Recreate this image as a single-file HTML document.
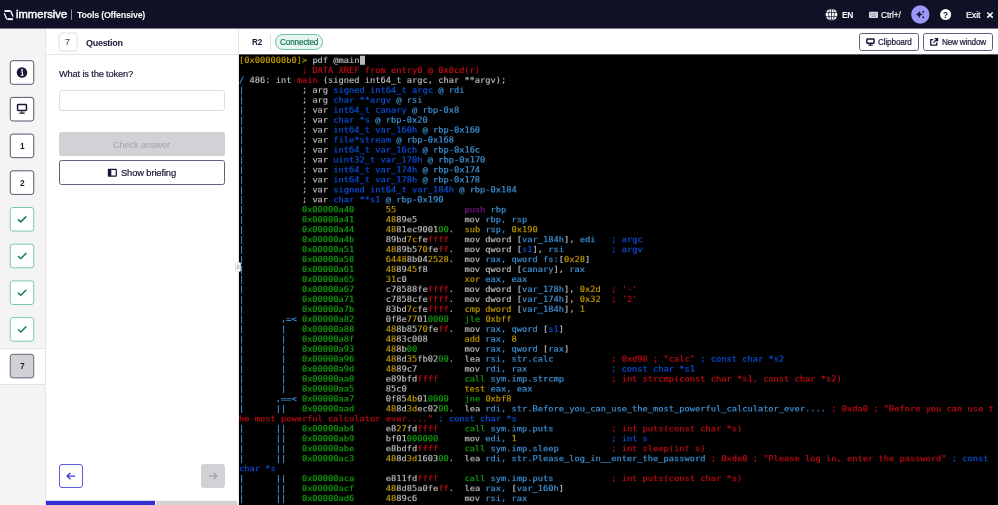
<!DOCTYPE html>
<html lang="en"><head><meta charset="utf-8"><title>Tools (Offensive)</title>
<style>
*{box-sizing:border-box;margin:0;padding:0}
html,body{width:998px;height:505px;overflow:hidden;background:#fff}
body{position:relative;font-family:"Liberation Sans",sans-serif;color:#17173a;-webkit-font-smoothing:antialiased}
.abs,.abs>*{position:absolute}
.t{position:absolute;white-space:pre;line-height:1;will-change:transform}
/* header */
#hdr{position:absolute;left:0;top:0;width:998px;height:28px;background:#101127}
#hdr:after{content:'';position:absolute;left:0;top:28px;width:998px;height:1px;background:#7d7d89}
#hdr .t{color:#fff}
/* sidebar */
#side{position:absolute;left:0;top:29px;width:46px;height:476px;background:#f4f4f5;border-right:1px solid #e6e6ea}
.sb{position:absolute;left:9.7px;width:24.6px;height:24.6px;border:1px solid #55556d;border-radius:2.5px;background:#fff}
.sb.ok{border-color:#7cc7b1}
.sb.on{background:#d0d0d5;border-color:#66667c}
.sb span{will-change:transform;position:absolute;left:0;right:0;top:7.6px;text-align:center;font-weight:700;font-size:8.4px;line-height:8px;color:#1d1d3c}
.sb svg{position:absolute;left:0;top:0}
#act{position:absolute;left:0;top:348px;width:45px;height:36.5px;background:#fff;border-top:1px solid #e2e2e6;border-bottom:1px solid #e2e2e6}
/* question panel */
#qp{position:absolute;left:46px;top:29px;width:193px;height:476px;background:#fff;border-right:1px solid #e6e6ea}
#qh{position:absolute;left:46px;top:29px;width:192px;height:25.5px;border-bottom:1px solid #e4e4e8}
/* terminal bar */
#tb{position:absolute;left:239px;top:29px;width:759px;height:26px;background:#fff}
.btn{position:absolute;border:1px solid #60607a;border-radius:2.5px;background:#fff}
/* terminal */
#term{position:absolute;left:239.00px;top:54.00px;width:759px;height:451px;background:#000;overflow:hidden;
 font-family:"DejaVu Sans Mono","Liberation Mono",monospace;font-size:8.710px;letter-spacing:0.0011px;color:#bebebe;}
#term .ln{position:absolute;left:0;transform-origin:0 8px;will-change:transform;-webkit-text-stroke:.18px;height:10px;line-height:10px;white-space:pre}
#term b{font-weight:400}
.y{color:#c19c00}b.r{color:#c80c14}.g{color:#13a10e}b.b{color:#0a52e0}.m{color:#881798}.c{color:#4197dc}
.cur{position:absolute;top:0;width:5.245px;height:10px;background:#b9b9b9}

</style></head>
<body>
<div id="hdr">
  <svg style="position:absolute;left:0;top:0" width="80" height="29" viewBox="0 0 80 29" fill="none" stroke="#fff" stroke-width="1.5" stroke-linecap="round" stroke-linejoin="round">
    <path d="M4.5 11.05H9.5" stroke-width="1.9" stroke-linecap="butt"/>
    <path d="M9.2 10.75Q10.7 10.75 11.25 12.1L12.9 16.2" stroke-width="1.3"/>
    <path d="M12.9 19.15H8" stroke-width="1.9" stroke-linecap="butt"/>
    <path d="M8.3 19.45Q6.8 19.45 6.25 18.1L4.5 13.7" stroke-width="1.3"/>
    <path d="M71.5 9.6V19.9" stroke="#8d8da3" stroke-width="1" stroke-linecap="butt"/>
  </svg>
  <span class="t" style="left:15.9px;top:9px;font-size:11.2px;transform:translateY(0.10px);-webkit-text-stroke:.45px #fff;letter-spacing:.03px">immersive</span>
  <span class="t" style="left:76.6px;top:11px;font-size:8.9px;transform:translateY(0.10px);font-weight:700;letter-spacing:-.22px">Tools (Offensive)</span>

  <svg style="position:absolute;left:820px;top:0" width="178" height="29" viewBox="820 0 178 29">
    <!-- globe -->
    <g>
      <circle cx="831.5" cy="14.6" r="5.85" fill="#fff"/>
      <g stroke="#101127" stroke-width=".7" fill="none">
        <ellipse cx="831.5" cy="14.6" rx="2.9" ry="5.85"/>
        <path d="M831.5 8.6V20.6M825.6 12.6H837.4M825.6 16.6H837.4"/>
      </g>
    </g>
    <!-- keyboard -->
    <rect x="869" y="11.7" width="9" height="6.2" rx=".8" fill="#dcdce4"/>
    <g stroke="#6f6f84" stroke-width=".75" stroke-dasharray=".8 .55"><path d="M870.2 13.5H877M870.2 14.9H877"/><path d="M871.4 16.3H875.8" stroke-dasharray="none"/></g>
    <!-- sparkle -->
    <circle cx="920.3" cy="14.5" r="9.15" fill="#9b97f6"/>
    <path d="M919.2 11.3Q919.6 14.1 922.4 14.5Q919.6 14.9 919.2 17.7Q918.8 14.9 916 14.5Q918.8 14.1 919.2 11.3Z" fill="#17173a" stroke="#17173a" stroke-width=".2" stroke-linejoin="round"/>
    <circle cx="923.2" cy="11.9" r=".95" fill="#17173a"/>
    <circle cx="923.3" cy="17.2" r=".95" fill="#17173a"/>
    <!-- help -->
    <circle cx="945.6" cy="14.6" r="5.5" fill="#fff"/>
    <!-- close -->
    <path d="M987.3 12.5L992.7 17.6M992.7 12.5L987.3 17.6" stroke="#fff" stroke-width="1.5" fill="none"/>
  </svg>
  <span class="t" style="left:841.9px;top:10px;font-size:8.4px;transform:translateY(0.90px);font-weight:700;letter-spacing:-.45px">EN</span>
  <span class="t" style="left:880.9px;top:10px;font-size:8.4px;transform:translateY(0.90px);letter-spacing:-.06px;-webkit-text-stroke:.17px #fff">Ctrl+/</span>
  <span class="t" style="left:943.2px;top:11px;font-size:8.2px;transform:translateY(0.50px);font-weight:700;color:#101127">?</span>
  <span class="t" style="left:966.2px;top:10px;font-size:8.9px;transform:translateY(0.90px);letter-spacing:-.08px;-webkit-text-stroke:.2px #fff">Exit</span>
</div>

<div id="side"></div>
<div id="act"></div>
<svg style="position:absolute;left:9px;top:59px" width="26" height="28" viewBox="0 0 26 28"><rect x="1.25" y="1.70" width="23.5" height="23.6" rx="2.6" fill="#fff" stroke="#55556d" stroke-width="1"/><circle cx="13.00" cy="13.50" r="5.25" fill="#17173a"/><circle cx="13.00" cy="11.00" r=".95" fill="#fff"/><path d="M11.90 13.00h1.6v3.2M11.70 16.20h2.8" stroke="#fff" stroke-width="1.05" fill="none"/></svg>
<svg style="position:absolute;left:9px;top:95px" width="26" height="28" viewBox="0 0 26 28"><rect x="1.25" y="2.40" width="23.5" height="23.6" rx="2.6" fill="#fff" stroke="#55556d" stroke-width="1"/><rect x="8.55" y="9.60" width="8.9" height="5.9" rx=".7" fill="none" stroke="#17173a" stroke-width="1.5"/><path d="M13.00 16.20v1.8M10.30 18.20h5.4" stroke="#17173a" stroke-width="1.2" fill="none"/></svg>
<svg style="position:absolute;left:9px;top:132px" width="26" height="28" viewBox="0 0 26 28"><rect x="1.25" y="2.10" width="23.5" height="23.6" rx="2.6" fill="#fff" stroke="#55556d" stroke-width="1"/></svg>
<span class="t" style="left:19.65px;top:141px;font-size:8.4px;transform:translateY(0.80px);font-weight:700;color:#1d1d3c">1</span>
<svg style="position:absolute;left:9px;top:169px" width="26" height="28" viewBox="0 0 26 28"><rect x="1.25" y="1.80" width="23.5" height="23.6" rx="2.6" fill="#fff" stroke="#55556d" stroke-width="1"/></svg>
<span class="t" style="left:19.65px;top:178px;font-size:8.4px;transform:translateY(0.50px);font-weight:700;color:#1d1d3c">2</span>
<svg style="position:absolute;left:9px;top:206px" width="26" height="28" viewBox="0 0 26 28"><rect x="1.25" y="1.50" width="23.5" height="23.6" rx="2.6" fill="#fff" stroke="#7cc7b1" stroke-width="1"/><path d="M8.90 13.40L11.90 15.90L17.30 10.40" stroke="#11805d" stroke-width="1.5" fill="none"/></svg>
<svg style="position:absolute;left:9px;top:242px" width="26" height="28" viewBox="0 0 26 28"><rect x="1.25" y="2.20" width="23.5" height="23.6" rx="2.6" fill="#fff" stroke="#7cc7b1" stroke-width="1"/><path d="M8.90 14.10L11.90 16.60L17.30 11.10" stroke="#11805d" stroke-width="1.5" fill="none"/></svg>
<svg style="position:absolute;left:9px;top:279px" width="26" height="28" viewBox="0 0 26 28"><rect x="1.25" y="1.90" width="23.5" height="23.6" rx="2.6" fill="#fff" stroke="#7cc7b1" stroke-width="1"/><path d="M8.90 13.80L11.90 16.30L17.30 10.80" stroke="#11805d" stroke-width="1.5" fill="none"/></svg>
<svg style="position:absolute;left:9px;top:316px" width="26" height="28" viewBox="0 0 26 28"><rect x="1.25" y="1.60" width="23.5" height="23.6" rx="2.6" fill="#fff" stroke="#7cc7b1" stroke-width="1"/><path d="M8.90 13.50L11.90 16.00L17.30 10.50" stroke="#11805d" stroke-width="1.5" fill="none"/></svg>
<svg style="position:absolute;left:9px;top:352px" width="26" height="28" viewBox="0 0 26 28"><rect x="1.25" y="2.30" width="23.5" height="23.6" rx="2.6" fill="#d0d0d5" stroke="#66667c" stroke-width="1"/></svg>
<span class="t" style="left:19.65px;top:362px;font-size:8.4px;transform:translateY(0.00px);font-weight:700;color:#1d1d3c">7</span>

<div id="qp"></div>
<div id="qh"></div>
<svg style="position:absolute;left:56px;top:30px" width="24" height="24" viewBox="56 30 24 24"><rect x="59.1" y="33" width="18" height="18" rx="2.8" fill="#fff" stroke="#dcdce2" stroke-width="1"/></svg>
<span class="t" style="left:65.3px;top:38px;font-size:9px;transform:translateY(0.40px);color:#3b3b55">7</span>
<span class="t" style="left:85.7px;top:38px;font-size:9px;transform:translateY(0.60px);font-weight:700;letter-spacing:-.29px">Question</span>
<span class="t" style="left:58.6px;top:70px;font-size:9.3px;transform:translateY(0.10px);letter-spacing:-.17px;-webkit-text-stroke:.18px #17173a">What is the token?</span>
<div style="position:absolute;left:58.6px;top:90.1px;width:166.4px;height:21.3px;border:1px solid #dcdce1;border-radius:3px"></div>
<div style="position:absolute;left:58.8px;top:132.4px;width:166.2px;height:23.9px;background:#d1d1d6;border-radius:2.5px"></div>
<span class="t" style="left:113.3px;top:140px;font-size:9.3px;transform:translateY(0.80px);letter-spacing:-.17px;color:#a3a3ae">Check answer</span>
<div class="btn" style="left:58.8px;top:160.1px;width:166.2px;height:24.6px"></div>
<svg style="position:absolute;left:106px;top:167px" width="12" height="12" viewBox="106 167 12 12"><rect x="108.4" y="169.3" width="7.9" height="6.8" rx=".4" fill="none" stroke="#17173a" stroke-width="1.2"/><rect x="108.4" y="169.3" width="2.9" height="6.8" fill="#17173a"/></svg>
<span class="t" style="left:121px;top:168px;font-size:9.4px;transform:translateY(0.40px);letter-spacing:-.14px;-webkit-text-stroke:.2px #17173a">Show briefing</span>

<div style="position:absolute;left:58.6px;top:463.8px;width:24.3px;height:24.1px;border:1px solid #5c5cdb;border-radius:3px"></div>
<svg style="position:absolute;left:58.6px;top:463.8px" width="24.3" height="24.1" viewBox="0 0 24.3 24.1"><path d="M16.2 12.1H8.2M11.4 8.9L8.1 12.1L11.4 15.3" stroke="#3d3dd0" stroke-width="1.4" fill="none"/></svg>
<div style="position:absolute;left:201.2px;top:463.8px;width:23.8px;height:24.1px;background:#d1d1d6;border-radius:3px"></div>
<svg style="position:absolute;left:201.2px;top:463.8px" width="23.8" height="24.1" viewBox="0 0 23.8 24.1"><path d="M7.8 12.1H15.8M12.6 8.9L15.9 12.1L12.6 15.3" stroke="#a3a3ae" stroke-width="1.4" fill="none"/></svg>
<svg style="position:absolute;left:46px;top:500px" width="193" height="5" viewBox="46 500 193 5"><rect x="46" y="500.8" width="109.1" height="4.2" fill="#2e2ed3"/><rect x="156.2" y="500.8" width="81.1" height="4.2" fill="#d1d1d6"/></svg>

<div id="tb"></div>
<span class="t" style="left:251.5px;top:39px;font-size:8.2px;transform:translateY(0.10px);font-weight:700;letter-spacing:-.2px">R2</span>
<div style="position:absolute;left:270.3px;top:34px;width:1px;height:16px;background:#e2e2e6"></div>
<div style="position:absolute;left:275px;top:34.4px;width:47.7px;height:15.4px;border:1px solid #6fc2aa;border-radius:8px;background:#e7f6f1"></div>
<span class="t" style="left:279.6px;top:38px;font-size:8.2px;transform:translateY(0.90px);letter-spacing:-.15px;color:#18735a;-webkit-text-stroke:.2px #18735a">Connected</span>
<div class="btn" style="left:859.4px;top:33px;width:59.2px;height:18px"></div>
<svg style="position:absolute;left:865px;top:36px" width="12" height="12" viewBox="865 36 12 12"><rect x="866.85" y="38.95" width="7.2" height="4.3" rx=".7" fill="none" stroke="#17173a" stroke-width="1.5"/><path d="M870.45 43.6V45M868.2 45.1h4.5" stroke="#17173a" stroke-width="1.1" fill="none"/></svg>
<span class="t" style="left:877.9px;top:38px;font-size:8.2px;transform:translateY(0.80px);letter-spacing:-.15px;-webkit-text-stroke:.2px #17173a">Clipboard</span>
<div class="btn" style="left:923.2px;top:33px;width:70px;height:18px"></div>
<svg style="position:absolute;left:928px;top:36px" width="12" height="12" viewBox="928 36 12 12"><path d="M933.3 39.7H930.75V45.15H936.7V42.6" fill="none" stroke="#17173a" stroke-width="1.3"/><path d="M934.7 38.65H937.55V41.5M937.3 38.9L933.6 42.6" fill="none" stroke="#17173a" stroke-width="1.3"/></svg>
<span class="t" style="left:941.8px;top:38px;font-size:8.2px;transform:translateY(0.80px);letter-spacing:-.2px;-webkit-text-stroke:.2px #17173a">New window</span>

<div id="term">
<div class="ln" style="top:0px;transform:translateY(0.95px) scaleY(.9)"><b class="y">[0x000008b0]&gt;</b> pdf @main<i class="cur" style="left:120.64px"></i></div>
<div class="ln" style="top:10px;transform:translateY(0.91px) scaleY(.9)">            <b class="r">; DATA XREF from entry0 @ 0x8cd(r)</b></div>
<div class="ln" style="top:20px;transform:translateY(0.86px) scaleY(.9)"><b class="c">/</b> 486: int <b class="r">main</b> (signed int64_t argc, char **argv);</div>
<div class="ln" style="top:30px;transform:translateY(0.82px) scaleY(.9)"><b class="c">|</b>           ; arg <b class="b">signed int64_t argc</b><b class="c"> @ rdi</b></div>
<div class="ln" style="top:40px;transform:translateY(0.78px) scaleY(.9)"><b class="c">|</b>           ; arg <b class="b">char **argv</b><b class="c"> @ rsi</b></div>
<div class="ln" style="top:50px;transform:translateY(0.74px) scaleY(.9)"><b class="c">|</b>           ; var <b class="b">int64_t canary</b><b class="c"> @ rbp-0x8</b></div>
<div class="ln" style="top:60px;transform:translateY(0.69px) scaleY(.9)"><b class="c">|</b>           ; var <b class="b">char *s</b><b class="c"> @ rbp-0x20</b></div>
<div class="ln" style="top:70px;transform:translateY(0.65px) scaleY(.9)"><b class="c">|</b>           ; var <b class="b">int64_t var_160h</b><b class="c"> @ rbp-0x160</b></div>
<div class="ln" style="top:80px;transform:translateY(0.61px) scaleY(.9)"><b class="c">|</b>           ; var <b class="b">file*stream</b><b class="c"> @ rbp-0x168</b></div>
<div class="ln" style="top:90px;transform:translateY(0.56px) scaleY(.9)"><b class="c">|</b>           ; var <b class="b">int64_t var_16ch</b><b class="c"> @ rbp-0x16c</b></div>
<div class="ln" style="top:100px;transform:translateY(0.52px) scaleY(.9)"><b class="c">|</b>           ; var <b class="b">uint32_t var_170h</b><b class="c"> @ rbp-0x170</b></div>
<div class="ln" style="top:110px;transform:translateY(0.48px) scaleY(.9)"><b class="c">|</b>           ; var <b class="b">int64_t var_174h</b><b class="c"> @ rbp-0x174</b></div>
<div class="ln" style="top:120px;transform:translateY(0.43px) scaleY(.9)"><b class="c">|</b>           ; var <b class="b">int64_t var_178h</b><b class="c"> @ rbp-0x178</b></div>
<div class="ln" style="top:130px;transform:translateY(0.39px) scaleY(.9)"><b class="c">|</b>           ; var <b class="b">signed int64_t var_184h</b><b class="c"> @ rbp-0x184</b></div>
<div class="ln" style="top:140px;transform:translateY(0.35px) scaleY(.9)"><b class="c">|</b>           ; var <b class="b">char **s1</b><b class="c"> @ rbp-0x190</b></div>
<div class="ln" style="top:150px;transform:translateY(0.31px) scaleY(.9)"><b class="c">|           </b><b class="g">0x00000a40</b>      <b class="y">55</b>             <b class="m">push</b><b class="c"> rbp</b></div>
<div class="ln" style="top:160px;transform:translateY(0.26px) scaleY(.9)"><b class="c">|           </b><b class="g">0x00000a41</b>      <b class="y">48</b>89e5         mov<b class="c"> rbp, rsp</b></div>
<div class="ln" style="top:170px;transform:translateY(0.22px) scaleY(.9)"><b class="c">|           </b><b class="g">0x00000a44</b>      <b class="y">48</b>81ec9001<b class="g">00</b>.  <b class="y">sub</b><b class="c"> rsp, </b><b class="y">0x190</b></div>
<div class="ln" style="top:180px;transform:translateY(0.18px) scaleY(.9)"><b class="c">|           </b><b class="g">0x00000a4b</b>      89bd<b class="y">7c</b>fe<b class="r">ffff</b>   mov dword [<b class="c">var_184h</b>], <b class="c">edi</b>   <b class="b">; argc</b></div>
<div class="ln" style="top:190px;transform:translateY(0.13px) scaleY(.9)"><b class="c">|           </b><b class="g">0x00000a51</b>      <b class="y">48</b>89b5<b class="y">70</b>fe<b class="r">ff</b>.  mov qword [<b class="b">s1</b>], <b class="c">rsi</b>         <b class="b">; argv</b></div>
<div class="ln" style="top:200px;transform:translateY(0.09px) scaleY(.9)"><b class="c">|           </b><b class="g">0x00000a58</b>      <b class="y">6448</b>8b04<b class="y">2528</b>.  mov<b class="c"> rax, qword fs:</b>[<b class="y">0x28</b>]</div>
<div class="ln" style="top:210px;transform:translateY(0.05px) scaleY(.9)"><b class="c">|           </b><b class="g">0x00000a61</b>      <b class="y">48</b>89<b class="y">45</b>f8       mov qword [<b class="c">canary</b>], <b class="c">rax</b></div>
<div class="ln" style="top:220px;transform:translateY(0.00px) scaleY(.9)"><b class="c">|           </b><b class="g">0x00000a65</b>      <b class="y">31</b>c0           <b class="y">xor</b><b class="c"> eax, eax</b></div>
<div class="ln" style="top:229px;transform:translateY(0.96px) scaleY(.9)"><b class="c">|           </b><b class="g">0x00000a67</b>      c78588fe<b class="r">ffff</b>.  mov dword [<b class="c">var_178h</b>], <b class="y">0x2d</b>  <b class="r">; '-'</b></div>
<div class="ln" style="top:239px;transform:translateY(0.92px) scaleY(.9)"><b class="c">|           </b><b class="g">0x00000a71</b>      c7858cfe<b class="r">ffff</b>.  mov dword [<b class="c">var_174h</b>], <b class="y">0x32</b>  <b class="r">; '2'</b></div>
<div class="ln" style="top:249px;transform:translateY(0.88px) scaleY(.9)"><b class="c">|           </b><b class="g">0x00000a7b</b>      83bd<b class="y">7c</b>fe<b class="r">ffff</b>.  <b class="y">cmp dword</b> [<b class="c">var_184h</b>],<b class="y"> 1</b></div>
<div class="ln" style="top:259px;transform:translateY(0.83px) scaleY(.9)"><b class="c">|       ,=&lt; </b><b class="g">0x00000a82</b>      0f8e<b class="y">77</b>01<b class="g">0000</b>   <b class="g">jle</b><b class="y"> 0xbff</b></div>
<div class="ln" style="top:269px;transform:translateY(0.79px) scaleY(.9)"><b class="c">|       |   </b><b class="g">0x00000a88</b>      <b class="y">48</b>8b85<b class="y">70</b>fe<b class="r">ff</b>.  mov<b class="c"> rax, qword</b> [<b class="b">s1</b>]</div>
<div class="ln" style="top:279px;transform:translateY(0.75px) scaleY(.9)"><b class="c">|       |   </b><b class="g">0x00000a8f</b>      <b class="y">48</b>83c008       <b class="y">add</b><b class="c"> rax, </b><b class="y">8</b></div>
<div class="ln" style="top:289px;transform:translateY(0.70px) scaleY(.9)"><b class="c">|       |   </b><b class="g">0x00000a93</b>      <b class="y">48</b>8b<b class="g">00</b>         mov<b class="c"> rax, qword</b> [<b class="c">rax</b>]</div>
<div class="ln" style="top:299px;transform:translateY(0.66px) scaleY(.9)"><b class="c">|       |   </b><b class="g">0x00000a96</b>      <b class="y">48</b>8d<b class="y">35</b>fb02<b class="g">00</b>.  lea<b class="c"> rsi, str.calc</b>           <b class="r">; 0xd98 ; "calc"</b><b class="b"> ; const char *s2</b></div>
<div class="ln" style="top:309px;transform:translateY(0.62px) scaleY(.9)"><b class="c">|       |   </b><b class="g">0x00000a9d</b>      <b class="y">48</b>89c7         mov<b class="c"> rdi, rax</b>                <b class="b">; const char *s1</b></div>
<div class="ln" style="top:319px;transform:translateY(0.57px) scaleY(.9)"><b class="c">|       |   </b><b class="g">0x00000aa0</b>      e89bfd<b class="r">ffff</b>     <b class="g">call</b><b class="c"> sym.imp.strcmp</b>         <b class="r">; int strcmp(const char *s1, const char *s2)</b></div>
<div class="ln" style="top:329px;transform:translateY(0.53px) scaleY(.9)"><b class="c">|       |   </b><b class="g">0x00000aa5</b>      85c0           <b class="y">test</b><b class="c"> eax, eax</b></div>
<div class="ln" style="top:339px;transform:translateY(0.49px) scaleY(.9)"><b class="c">|      ,==&lt; </b><b class="g">0x00000aa7</b>      0f85<b class="y">4b</b>01<b class="g">0000</b>   <b class="g">jne</b><b class="y"> 0xbf8</b></div>
<div class="ln" style="top:349px;transform:translateY(0.44px) scaleY(.9)"><b class="c">|      ||   </b><b class="g">0x00000aad</b>      <b class="y">48</b>8d<b class="y">3d</b>ec02<b class="g">00</b>.  lea<b class="c"> rdi, str.Before_you_can_use_the_most_powerful_calculator_ever....</b><b class="r"> ; 0xda0 ; "Before you can use t</b></div>
<div class="ln" style="top:359px;transform:translateY(0.40px) scaleY(.9)"><b class="r">he most powerful calculator ever...."</b><b class="b"> ; const char *s</b></div>
<div class="ln" style="top:369px;transform:translateY(0.36px) scaleY(.9)"><b class="c">|      ||   </b><b class="g">0x00000ab4</b>      e8<b class="y">27</b>fd<b class="r">ffff</b>     <b class="g">call</b><b class="c"> sym.imp.puts</b>           <b class="r">; int puts(const char *s)</b></div>
<div class="ln" style="top:379px;transform:translateY(0.32px) scaleY(.9)"><b class="c">|      ||   </b><b class="g">0x00000ab9</b>      bf01<b class="g">000000</b>     mov<b class="c"> edi, </b><b class="y">1</b>                  <b class="b">; int s</b></div>
<div class="ln" style="top:389px;transform:translateY(0.27px) scaleY(.9)"><b class="c">|      ||   </b><b class="g">0x00000abe</b>      e8bdfd<b class="r">ffff</b>     <b class="g">call</b><b class="c"> sym.imp.sleep</b>          <b class="r">; int sleep(int s)</b></div>
<div class="ln" style="top:399px;transform:translateY(0.23px) scaleY(.9)"><b class="c">|      ||   </b><b class="g">0x00000ac3</b>      <b class="y">48</b>8d<b class="y">3d</b>1603<b class="g">00</b>.  lea<b class="c"> rdi, str.Please_log_in__enter_the_password</b><b class="r"> ; 0xde0 ; "Please log in, enter the password"</b><b class="b"> ; const</b></div>
<div class="ln" style="top:409px;transform:translateY(0.19px) scaleY(.9)"><b class="b">char *s</b></div>
<div class="ln" style="top:419px;transform:translateY(0.14px) scaleY(.9)"><b class="c">|      ||   </b><b class="g">0x00000aca</b>      e811fd<b class="r">ffff</b>     <b class="g">call</b><b class="c"> sym.imp.puts</b>           <b class="r">; int puts(const char *s)</b></div>
<div class="ln" style="top:429px;transform:translateY(0.10px) scaleY(.9)"><b class="c">|      ||   </b><b class="g">0x00000acf</b>      <b class="y">48</b>8d85a0fe<b class="r">ff</b>.  lea<b class="c"> rax, </b>[<b class="c">var_160h</b>]</div>
<div class="ln" style="top:439px;transform:translateY(0.06px) scaleY(.9)"><b class="c">|      ||   </b><b class="g">0x00000ad6</b>      <b class="y">48</b>89c6         mov<b class="c"> rsi, rax</b></div>
</div>
<div style="position:absolute;left:239px;top:54px;width:759px;height:1px;background:#5e5e5e"></div>
<svg style="position:absolute;left:233px;top:260px" width="10" height="14" viewBox="233 260 10 14"><rect x="235.4" y="262.4" width="5.3" height="9.2" rx="1.4" fill="#fff" stroke="#d2d2d9" stroke-width=".8"/><path d="M237.3 264.7V269.4M238.9 264.7V269.4" stroke="#9b9ba8" stroke-width=".7"/></svg>

</body></html>
